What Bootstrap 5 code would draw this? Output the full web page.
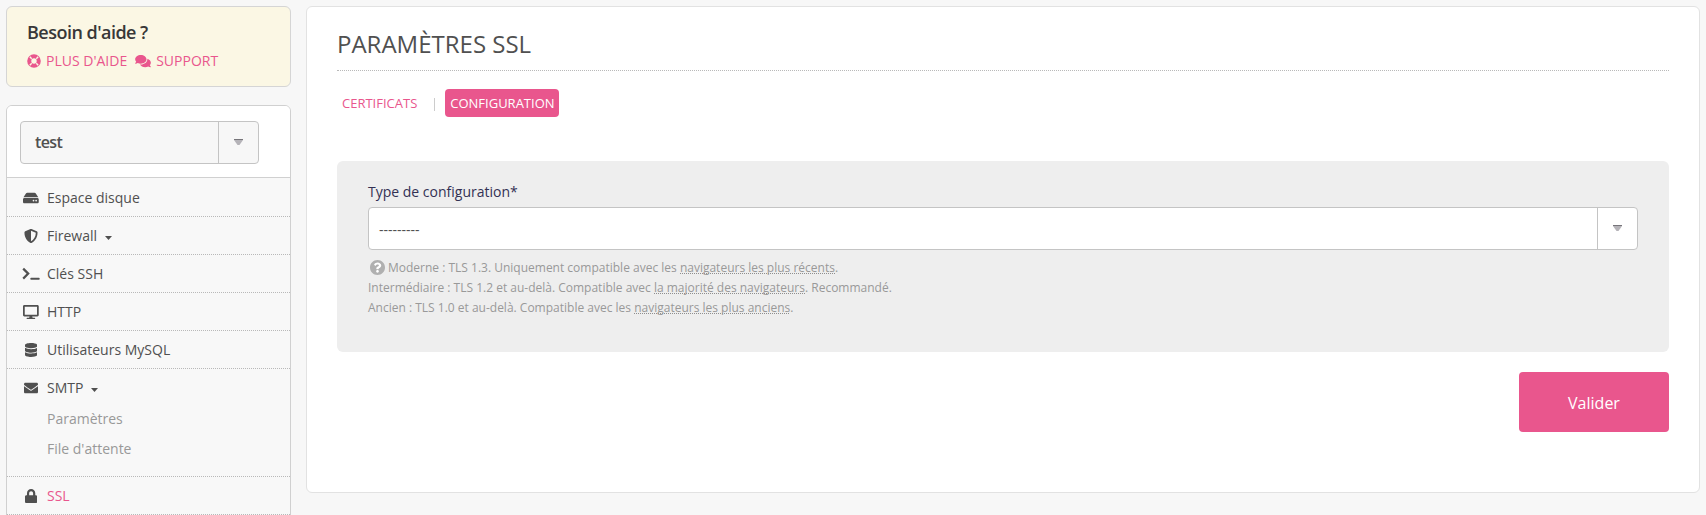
<!DOCTYPE html>
<html lang="fr">
<head>
<meta charset="utf-8">
<meta name="viewport" content="width=device-width, initial-scale=1">
<title>Paramètres SSL</title>
<link href="https://cdn.jsdelivr.net/npm/bootstrap@5.3.0/dist/css/bootstrap.min.css" rel="stylesheet">
<style>
:root{--pink:#e9568d;--ink:#505050}
body{font:14px/20px "Open Sans",sans-serif;color:var(--ink);background:#f7f7f7;height:515px;overflow:hidden}
a{color:var(--pink);text-decoration:none}
svg{fill:currentColor;display:block}
.page{padding:6px 6px 0;gap:15px}
.side{width:285px;flex:none}
.help-box{height:81px;background:#fbf7e4;border:1px solid #d5d5d5;border-radius:6px;padding:13px 20px;margin-bottom:18px}
.help-box h2{font-size:18px;line-height:24px;font-weight:600;color:#383838;margin:0 0 7px;letter-spacing:-.52px}
.help-box svg{margin-right:5px}
.menu-box{border:1px solid #d0d0d0;border-radius:6px 6px 0 0;background:#f8f8f8;height:430px}
.menu-head{background:#fff;border-bottom:1px solid #d0d0d0;height:72px;padding:15px 13px;border-radius:5px 5px 0 0}
.picker{border:1px solid #c4c4c4;border-radius:4px;height:43px;background:#fff}
.picker .arrow{width:40px;border-left:1px solid #c4c4c4;padding-bottom:2px}
.picker .value{padding-left:10px}
.site-picker{width:239px;background:#f7f7f7;font-size:16px;font-weight:600;letter-spacing:-.6px}
.site-picker .value{padding:0 0 2px 14px}
.entry{border-bottom:1px dotted #b9b9b9;padding:9px 0 8px 15px}
.entry:nth-child(2){padding-top:10px}
.entry-line{height:20px}
.entry-line .ico{width:18px;margin-right:7px;display:flex;justify-content:center}
.subs{padding:6px 0 4px}
.subs a{color:#999;display:block;height:30px;line-height:30px;padding-left:25px}
.panel-main{height:487px;border:1px solid #e2e2e2;border-radius:6px;background:#fff;padding:21px 30px 0}
h1{font-size:24px;line-height:32px;font-weight:400;height:43px;border-bottom:1px dotted #b9b9b9;margin:0 0 18px}
.tabs{font-size:13px;height:28px}
.tabs a{height:28px;line-height:28px;padding:0 5px;border-radius:4px}
.tabs .current{background:var(--pink);color:#fff;width:114px}
.tabs i{width:1px;height:13px;background:#ccc;margin:2px 10px 0 12px}
.form-box{background:#eee;border-radius:6px;height:191px;margin-top:44px;padding:21px 31px}
.form-box label{color:#333154;display:block;height:25px}
.form-box .value{padding-top:3px}
.hint{font-size:12px;color:#999;margin-top:8px}
.hint a{color:#999;background:repeating-linear-gradient(90deg,#8f8f8f 0 1px,transparent 1px 2px) left 0 bottom 2px/100% 1px no-repeat}
.hint div{height:20px}
.hint svg{margin:-2px 3px 0 2px;color:#b0b0b0}
.send{width:150px;height:60px;background:var(--pink);color:#fff;border:0;border-radius:4px;font-size:16px;margin-top:20px;padding-top:3px}
</style>
</head>
<body>
<div class="page d-flex align-items-start">
  <aside class="side">
    <section class="help-box">
      <h2>Besoin d'aide ?</h2>
      <div class="d-flex align-items-center">
        <a href="#" class="d-flex align-items-center me-2 pe-0"><svg width="14" height="14" viewBox="0 0 14 14"><circle cx="7" cy="7" r="4.75" fill="none" stroke="currentColor" stroke-width="4.1"/><path d="M2.8 2.8l1.9 1.9M9.3 9.3l1.9 1.9M11.2 2.8L9.3 4.7M4.7 9.3l-1.9 1.9" stroke="#fbf7e4" stroke-width="1.4"/></svg>PLUS D'AIDE</a>
        <a href="#" class="d-flex align-items-center"><svg width="16" height="14" viewBox="0 0 576 512"><path d="M416 192c0-88.4-93.1-160-208-160S0 103.6 0 192c0 34.3 14.1 65.9 38 92-13.4 30.2-35.5 54.2-35.8 54.5-2.2 2.3-2.8 5.7-1.5 8.7S4.8 352 8 352c36.6 0 66.9-12.3 88.7-25 32.2 15.7 70.3 25 111.3 25 114.9 0 208-71.6 208-160zm122 220c23.9-26 38-57.7 38-92 0-66.9-53.5-124.2-129.3-148.1.9 6.6 1.3 13.3 1.3 20.1 0 105.9-107.7 192-240 192-10.8 0-21.3-.8-31.7-1.9C207.8 439.6 281.8 480 368 480c41 0 79.1-9.2 111.3-25 21.8 12.7 52.1 25 88.7 25 3.2 0 6.1-1.9 7.3-4.8 1.3-2.9.7-6.3-1.5-8.7-.3-.3-22.4-24.2-35.8-54.5z"/></svg>SUPPORT</a>
      </div>
    </section>
    <nav class="menu-box">
      <div class="menu-head">
        <div class="picker site-picker d-flex align-items-stretch"><span class="value flex-grow-1 d-flex align-items-center">test</span><span class="arrow d-flex align-items-center justify-content-center"><svg width="9" height="6" viewBox="0 0 9 6"><path d="M0 0h9v1L5.5 6h-2L0 1z" fill="#b5b3b8"/><path d="M0 0h9v1H0z" fill="#77757a"/></svg></span></div>
      </div>
      <div class="entry"><div class="entry-line d-flex align-items-center"><span class="ico"><svg width="15.75" height="14" viewBox="0 0 576 512"><path d="M576 304v96c0 26.51-21.49 48-48 48H48c-26.51 0-48-21.49-48-48v-96c0-26.51 21.49-48 48-48h480c26.51 0 48 21.49 48 48zm-48-80a79.557 79.557 0 0 1 30.777 6.165L462.25 85.374A48.003 48.003 0 0 0 422.311 64H153.689a48 48 0 0 0-39.938 21.374L17.223 230.165A79.557 79.557 0 0 1 48 224h480zm-48 96c-17.673 0-32 14.327-32 32s14.327 32 32 32 32-14.327 32-32-14.327-32-32-32zm-96 0c-17.673 0-32 14.327-32 32s14.327 32 32 32 32-14.327 32-32-14.327-32-32-32z"/></svg></span>Espace disque</div></div>
      <div class="entry"><div class="entry-line d-flex align-items-center"><span class="ico"><svg width="14" height="14" viewBox="0 0 512 512"><path d="M466.5 83.7l-192-80a48.15 48.15 0 0 0-36.9 0l-192 80C27.7 91.1 16 108.6 16 128c0 198.5 114.5 335.7 221.5 380.3 11.8 4.9 25.1 4.9 36.9 0C360.1 472.6 496 349.3 496 128c0-19.4-11.7-36.9-29.5-44.3zM256.1 446.3l-.1-381 175.9 73.3c-3.3 151.4-82.1 261.1-175.8 307.7z"/></svg></span>Firewall<svg class="ms-2 mt-1" width="7" height="4" viewBox="0 0 7 4"><path d="M0 0h7L3.5 4z"/></svg></div></div>
      <div class="entry"><div class="entry-line d-flex align-items-center"><span class="ico"><svg width="18" height="14" viewBox="0 0 18 14"><path d="M1.2 1.6l5 5-5 5" fill="none" stroke="currentColor" stroke-width="2.2"/><rect x="8.5" y="10.7" width="9" height="2" rx=".5"/></svg></span>Clés SSH</div></div>
      <div class="entry"><div class="entry-line d-flex align-items-center"><span class="ico"><svg width="15.75" height="14" viewBox="0 0 576 512"><path d="M528 0H48C21.5 0 0 21.5 0 48v320c0 26.5 21.5 48 48 48h192l-16 48h-72c-13.3 0-24 10.7-24 24s10.7 24 24 24h272c13.3 0 24-10.7 24-24s-10.7-24-24-24h-72l-16-48h192c26.5 0 48-21.5 48-48V48c0-26.5-21.5-48-48-48zm-16 352H64V64h448v288z"/></svg></span>HTTP</div></div>
      <div class="entry"><div class="entry-line d-flex align-items-center"><span class="ico"><svg width="12.25" height="14" viewBox="0 0 448 512"><path d="M448 73.143v45.714C448 159.143 347.667 192 224 192S0 159.143 0 118.857V73.143C0 32.857 100.333 0 224 0s224 32.857 224 73.143zM448 176v102.857C448 319.143 347.667 352 224 352S0 319.143 0 278.857V176c48.125 33.143 136.208 48.572 224 48.572S399.874 209.143 448 176zm0 160v102.857C448 479.143 347.667 512 224 512S0 479.143 0 438.857V336c48.125 33.143 136.208 48.572 224 48.572S399.874 369.143 448 336z"/></svg></span>Utilisateurs MySQL</div></div>
      <div class="entry"><div class="entry-line d-flex align-items-center"><span class="ico"><svg width="14" height="14" viewBox="0 0 512 512"><path d="M502.3 190.8c3.9-3.1 9.7-.2 9.7 4.7V400c0 26.5-21.5 48-48 48H48c-26.5 0-48-21.5-48-48V195.6c0-5 5.7-7.8 9.7-4.7 22.4 17.4 52.1 39.5 154.1 113.6 21.1 15.4 56.7 47.8 92.2 47.6 35.7.3 72-32.8 92.3-47.6 102-74.1 131.6-96.3 154-113.7zM256 320c23.2.4 56.6-29.2 73.4-41.4 132.7-96.3 142.8-104.7 173.4-128.7 5.8-4.5 9.2-11.5 9.2-18.9v-19c0-26.5-21.5-48-48-48H48c-26.5 0-48 21.5-48 48v19c0 7.4 3.4 14.3 9.2 18.9 30.6 23.9 40.7 32.4 173.4 128.7 16.8 12.2 50.2 41.8 73.4 41.4z"/></svg></span>SMTP<svg class="ms-2 mt-1" width="7" height="4" viewBox="0 0 7 4"><path d="M0 0h7L3.5 4z"/></svg></div>
        <div class="subs"><a href="#">Paramètres</a><a href="#">File d'attente</a></div></div>
      <div class="entry"><div class="entry-line d-flex align-items-center"><span class="ico"><svg width="12.25" height="14" viewBox="0 0 448 512"><path d="M400 224h-24v-72C376 68.2 307.8 0 224 0S72 68.2 72 152v72H48c-26.5 0-48 21.5-48 48v192c0 26.5 21.5 48 48 48h352c26.5 0 48-21.5 48-48V272c0-26.5-21.5-48-48-48zm-104 0H152v-72c0-39.7 32.3-72 72-72s72 32.3 72 72v72z"/></svg></span><a href="#">SSL</a></div></div>
    </nav>
  </aside>
  <main class="panel-main flex-grow-1">
    <h1>PARAMÈTRES SSL</h1>
    <nav class="tabs d-flex align-items-center"><a href="#">CERTIFICATS</a><i></i><a href="#" class="current">CONFIGURATION</a></nav>
    <form>
      <div class="form-box">
        <label>Type de configuration*</label>
        <div class="picker d-flex align-items-stretch"><span class="value flex-grow-1 d-flex align-items-center">---------</span><span class="arrow d-flex align-items-center justify-content-center"><svg width="9" height="6" viewBox="0 0 9 6"><path d="M0 0h9v1L5.5 6h-2L0 1z" fill="#b5b3b8"/><path d="M0 0h9v1H0z" fill="#77757a"/></svg></span></div>
        <div class="hint">
          <div class="d-flex align-items-center"><svg width="15" height="15" viewBox="8 8 496 496"><circle cx="256" cy="256" r="220" fill="#fff"/><path d="M504 256c0 136.997-111.043 248-248 248S8 392.997 8 256C8 119.083 119.043 8 256 8s248 111.083 248 248zM262.655 90c-54.497 0-89.255 22.957-116.549 63.758-3.536 5.286-2.353 12.415 2.715 16.258l34.699 26.31c5.205 3.947 12.621 3.008 16.665-2.122 17.864-22.658 30.113-35.797 57.303-35.797 20.429 0 45.698 13.148 45.698 32.958 0 14.976-12.363 22.667-32.534 33.976C247.128 238.528 216 254.941 216 296v4c0 6.627 5.373 12 12 12h56c6.627 0 12-5.373 12-12v-1.333c0-28.462 83.186-29.647 83.186-106.667 0-58.002-60.165-102-116.531-102zM256 338c-25.365 0-46 20.635-46 46 0 25.364 20.635 46 46 46s46-20.636 46-46c0-25.364-20.635-46-46-46z"/></svg><span>Moderne : TLS 1.3. Uniquement compatible avec les <a href="#">navigateurs les plus récents</a>.</span></div>
          <div>Intermédiaire : TLS 1.2 et au-delà. Compatible avec <a href="#">la majorité des navigateurs</a>. Recommandé.</div>
          <div>Ancien : TLS 1.0 et au-delà. Compatible avec les <a href="#">navigateurs les plus anciens</a>.</div>
        </div>
      </div>
      <div class="d-flex justify-content-end"><button type="button" class="send">Valider</button></div>
    </form>
  </main>
</div>
<script src="https://cdn.jsdelivr.net/npm/bootstrap@5.3.0/dist/js/bootstrap.bundle.min.js"></script>
</body>
</html>
